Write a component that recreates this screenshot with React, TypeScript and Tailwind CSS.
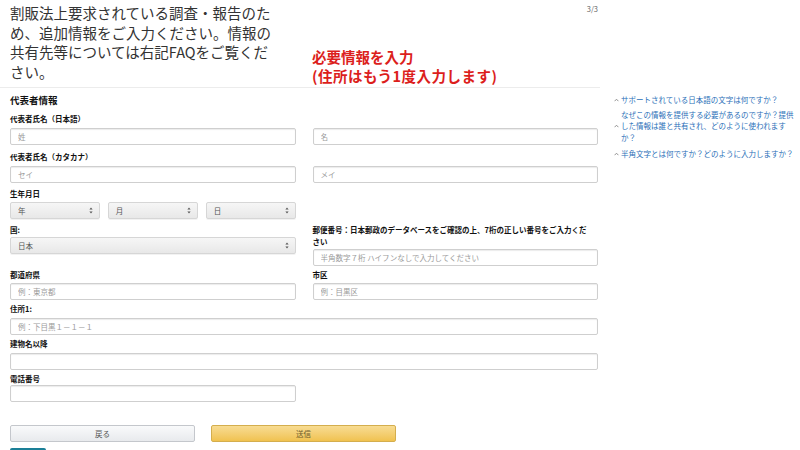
import type { ReactNode } from 'react'

const jp = "font-['Noto_Sans_CJK_JP','Noto_Sans',sans-serif]"

function Label({ children, className = '' }: { children?: ReactNode; className?: string }) {
  return (
    <div className={`whitespace-nowrap text-[7.5px] font-bold leading-[12px] text-[#111] ${className}`}>{children}</div>
  )
}

function Field({ placeholder = '' }: { placeholder?: string }) {
  return (
    <input
      readOnly
      placeholder={placeholder}
      className="block h-[17px] w-full rounded-[2px] border border-[#cfcfcf] bg-white px-[7px] text-[7.5px] text-[#333] shadow-[inset_0_1px_1px_rgba(0,0,0,0.08)] outline-none placeholder:text-[#9a9a9a]"
    />
  )
}

function Select({ value }: { value: string }) {
  return (
    <div className="flex h-[17px] w-full items-center justify-between rounded-[2px] border border-[#d6d6d6] bg-linear-to-b from-[#f6f6f6] to-[#e8e8e8] pl-[7px] pr-[6px] text-[7.5px] text-[#555] shadow-[0_1px_0_rgba(0,0,0,0.05)]">
      <span>{value}</span>
      <svg width="4" height="7" viewBox="0 0 4 7">
        <path d="M2 0.5L3.6 2.6H0.4Z" fill="#555" />
        <path d="M2 6.5L3.6 4.4H0.4Z" fill="#555" />
      </svg>
    </div>
  )
}

function Caret() {
  return (
    <svg width="5" height="4" viewBox="0 0 5 4" className="shrink-0">
      <path d="M0.6 3.2L2.5 1.2L4.4 3.2" fill="none" stroke="#888" strokeWidth="0.9" />
    </svg>
  )
}

function Faq({ lines, className = '' }: { lines: string[]; className?: string }) {
  return (
    <div className={`flex items-center gap-[2px] ${className}`}>
      <Caret />
      <div className="whitespace-nowrap text-[7.5px] leading-[11.5px] text-[#2a6fb8]">
        {lines.map((l) => (
          <div key={l}>{l}</div>
        ))}
      </div>
    </div>
  )
}

export default function App() {
  return (
    <div className={`flex h-[450px] w-[800px] overflow-hidden bg-white ${jp}`}>
      <main className="w-[600px] shrink-0">
        {/* ヘッダー */}
        <header className="flex h-[88px] border-b border-[#ececec]">
          <div className="w-[312px] shrink-0 whitespace-nowrap pl-[10px] pt-[3px] text-[14.5px] leading-[19.5px] text-[#333]">
            <div>割販法上要求されている調査・報告のた</div>
            <div>め、追加情報をご入力ください。情報の</div>
            <div>共有先等については右記FAQをご覧くだ</div>
            <div>さい。</div>
          </div>
          <div className="flex-1 whitespace-nowrap pt-[47px] text-[14.5px] font-bold leading-[19px] text-[#dc1e1c]">
            <div>必要情報を入力</div>
            <div className="tracking-[0.5px]">(住所はもう1度入力します)</div>
          </div>
          <div className="pr-[2px] pt-[3px] text-[7.5px] text-[#666]">3/3</div>
        </header>

        {/* フォーム */}
        <section className="pl-[10px] pr-[2px] pt-[6px]">
          <div className="text-[9.5px] font-bold leading-[12px] text-[#111]">代表者情報</div>

          <div className="mt-[7px] grid grid-cols-2 gap-x-[17px]">
            <Label className="mb-[3px]">代表者氏名（日本語）</Label>
            <div />
            <Field placeholder="姓" />
            <Field placeholder="名" />
          </div>

          <div className="mt-[6px] grid grid-cols-2 gap-x-[17px]">
            <Label className="mb-[3px]">代表者氏名（カタカナ）</Label>
            <div />
            <Field placeholder="セイ" />
            <Field placeholder="メイ" />
          </div>

          <div className="mt-[5px] grid grid-cols-2 gap-x-[17px]">
            <div>
              <Label className="mb-[2px]">生年月日</Label>
              <div className="grid grid-cols-3 gap-x-[8px]">
                <Select value="年" />
                <Select value="月" />
                <Select value="日" />
              </div>
            </div>
          </div>

          <div className="mt-[5px] grid grid-cols-2 gap-x-[17px]">
            <div>
              <Label className="mb-[1px]">国:</Label>
              <Select value="日本" />
            </div>
            <div>
              <Label className="mb-[1px]">
                郵便番号：日本郵政のデータベースをご確認の上、7桁の正しい番号をご入力くだ
                <br />
                さい
              </Label>
              <Field placeholder="半角数字７桁 ハイフンなしで入力してください" />
            </div>
          </div>

          <div className="mt-[3px] grid grid-cols-2 gap-x-[17px]">
            <Label className="mb-[2px]">都道府県</Label>
            <Label className="mb-[2px]">市区</Label>
            <Field placeholder="例：東京都" />
            <Field placeholder="例：目黒区" />
          </div>

          <div className="mt-[3px]">
            <Label className="mb-[3px]">住所1:</Label>
            <Field placeholder="例：下目黒１－１－１" />
          </div>

          <div className="mt-[3px]">
            <Label className="mb-[3px]">建物名以降</Label>
            <Field />
          </div>

          <div className="mt-[3px] grid grid-cols-2 gap-x-[17px]">
            <div>
              <Label>電話番号</Label>
              <Field />
            </div>
          </div>

          <div className="mt-[23px] flex gap-[16px]">
            <button className="h-[17px] w-[185px] rounded-[2px] border border-[#c4c7cc] bg-linear-to-b from-[#f9fafb] to-[#e8eaed] text-[7.5px] text-[#555]">
              戻る
            </button>
            <button className="h-[17px] w-[185px] rounded-[2px] border border-[#d4ae4e] bg-linear-to-b from-[#f8dc92] to-[#f0c24f] text-[7.5px] text-[#6b5a2a]">
              送信
            </button>
          </div>
          <div className="mt-[6px] h-[4px] w-[36px] rounded-t-[2px] bg-[#1b7f97]" />
        </section>
      </main>

      {/* FAQ */}
      <aside className="flex-1 pl-[14px] pt-[94px]">
        <Faq lines={['サポートされている日本語の文字は何ですか？']} />
        <Faq
          className="mt-[3px]"
          lines={[
            'なぜこの情報を提供する必要があるのですか？提供',
            'した情報は誰と共有され、どのように使われます',
            'か？',
          ]}
        />
        <Faq className="mt-[5px]" lines={['半角文字とは何ですか？どのように入力しますか？']} />
      </aside>
    </div>
  )
}
